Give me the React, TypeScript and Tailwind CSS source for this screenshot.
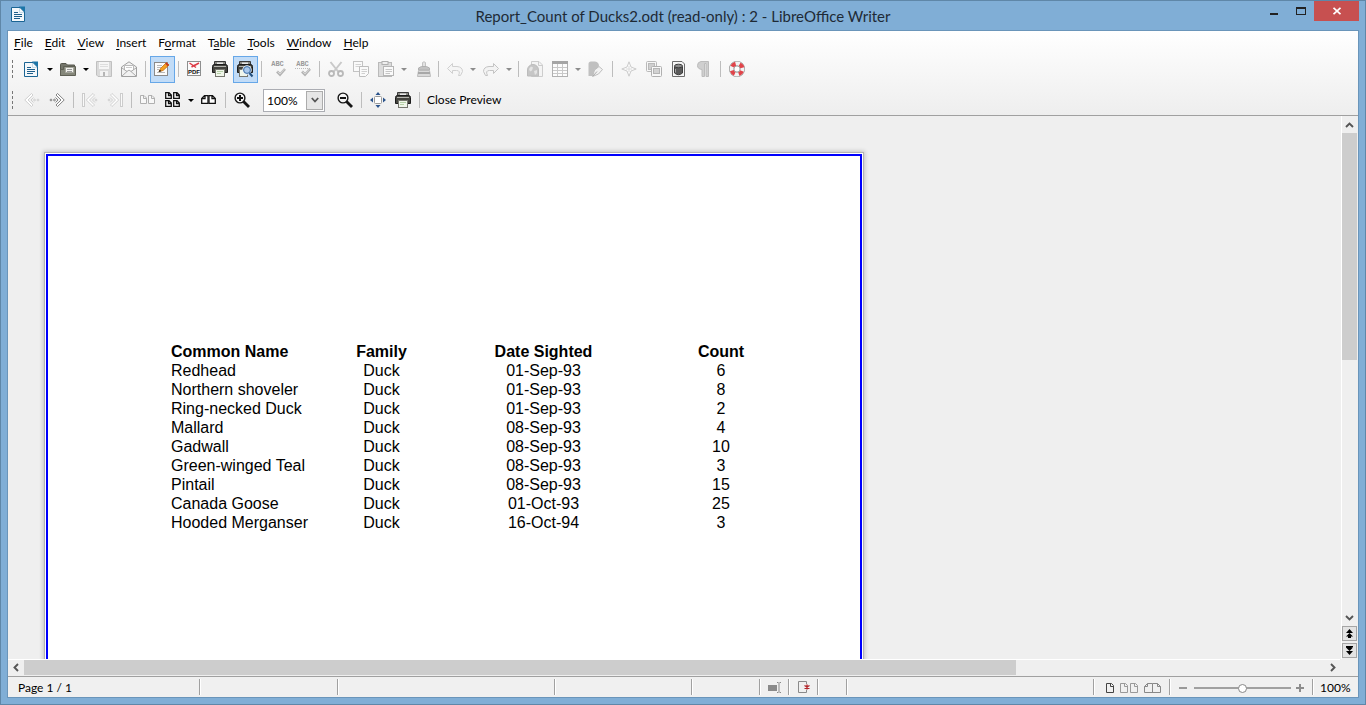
import React, { useState } from "react";
import type { ReactNode } from "react";

/* ---------- small building blocks ---------- */

function Icon({ children, crisp }: { children: ReactNode; crisp?: boolean }) {
  return (
    <svg
      width="17"
      height="17"
      viewBox="0 0 17 17"
      fill="none"
      shapeRendering={crisp ? "crispEdges" : "auto"}
      aria-hidden="true"
    >
      {children}
    </svg>
  );
}

function ToolButton({
  label,
  children,
  active,
  disabled,
}: {
  label: string;
  children: ReactNode;
  active?: boolean;
  disabled?: boolean;
}) {
  return (
    <button
      type="button"
      aria-label={label}
      title={label}
      disabled={disabled}
      className={
        active
          ? "flex h-[27px] w-[25px] shrink-0 items-center border border-[#66a7e8] bg-[#c2dcf7] pl-[3px]"
          : "flex h-[27px] w-[25px] shrink-0 items-center pl-1"
      }
    >
      {children}
    </button>
  );
}

function Arrow({ label, dim }: { label: string; dim?: boolean }) {
  return (
    <button type="button" aria-label={label} className="flex w-[11px] shrink-0 items-center pl-[2px]">
      <svg width="6" height="3" viewBox="0 0 6 3" aria-hidden="true">
        <path d="M0 0H6L3 3Z" fill={dim ? "#8c8c8c" : "#000"} />
      </svg>
    </button>
  );
}

function Sep() {
  return (
    <span className="flex w-2 shrink-0 pl-[3px]">
      <span className="h-4 w-px bg-[#bdbdbd]" />
    </span>
  );
}

function Grip() {
  return (
    <span className="flex w-3 shrink-0 pl-1">
      <span className="h-[18px] w-px border-l border-dashed border-[#777]" />
    </span>
  );
}

/* ---------- icons ---------- */

const WriterIcon = () => (
  <Icon>
    <path d="M.500 1.500H9L13.500 6V15.500H.500Z" fill="#f4f8fb" stroke="#1b6594" />
    <path d="M8 .5H14V6.500Z" fill="#1b75a8" />
    <path d="M8.500 2V6.500H13" stroke="#c8dce9" />
    <path d="M3 6.500H7M3 8.500H11M3 10.500H11M3 12.500H9" stroke="#1f5f8b" />
  </Icon>
);

const OpenIcon = () => (
  <Icon>
    <path d="M.500 3.500Q.5 2.500 1.500 2.500H6L7.500 4H14.500V14.500H.500Z" fill="#74756a" stroke="#55564c" />
    <path d="M.500 8.500H3.500V5.500H15.500V14.500H.500Z" fill="#85877a" stroke="#5f6055" />
    <path d="M5.500 6.500H13.500V11.500H5.500Z" fill="#f3f3ef" stroke="#a5a69c" />
    <path d="M7 8.500H12M7 10.500H12" stroke="#999" />
  </Icon>
);

const SaveIcon = () => (
  <Icon>
    <path d="M.500 .5H15.500V15.500H2L.500 14Z" fill="#dadada" stroke="#c0c0c0" />
    <rect x="3" y="1" width="10" height="7" fill="#f6f6f6" />
    <path d="M4 3.500H12M4 5.500H12" stroke="#dedede" />
    <rect x="4" y="10" width="8" height="5" fill="#f2f2f2" />
    <rect x="7" y="11" width="2" height="4" fill="#b5b5b5" />
  </Icon>
);

const MailIcon = () => (
  <Icon>
    <path d="M.500 6L8 .8L15.500 6V15.500H.500Z" fill="#f2f2f2" stroke="#a0a0a0" />
    <path d="M3.500 9V4.500H12.500V9" fill="#fff" stroke="#bbb" />
    <path d="M1 7L6 10.500L1 15M15 7L10 10.500L15 15M6 10.500L8 9L10 10.500" stroke="#ababab" />
    <path d="M5 6.500H11" stroke="#ccc" />
  </Icon>
);

const EditIcon = () => (
  <Icon>
    <rect x=".5" y="1.500" width="13" height="13" fill="#fbfbfb" stroke="#8a8a8a" />
    <path d="M3 4.500H8M3 6.500H7M3 8.500H5M3 11.500H11" stroke="#b9b9b9" />
    <path d="M5 10.500L6.500 7.500L12.500 1.500L15 4L9 9.500Z" fill="#f4a224" stroke="#c66f10" strokeWidth=".8" />
    <path d="M12.500 1.500L15 4L13.700 5.200L11.200 2.800Z" fill="#c0392b" />
    <path d="M4.500 11L5.800 8.800L7.500 10.200Z" fill="#222" />
  </Icon>
);

const PdfIcon = () => (
  <Icon>
    <rect x=".5" y=".5" width="13" height="14" fill="#fbfbfb" stroke="#8f8f8f" />
    <path d="M2.500 2L9 6.500M6.500 5L12 2M4.500 6L8 4" stroke="#dd3a45" strokeWidth="1.500" />
    <text x="7" y="13" textAnchor="middle" fontSize="6" fontWeight="700" fontFamily="Liberation Sans, sans-serif" fill="#111">
      PDF
    </text>
  </Icon>
);

const PrinterBody = () => (
  <>
    <path d="M2.500 4V.5H13.500V4" fill="#8a8a84" stroke="#3a3a3a" />
    <path d="M5 2.500H11" stroke="#e8e8e8" strokeWidth="2" />
    <path d="M.500 5.500Q.5 3.500 2.500 3.500H13.500Q15.500 3.500 15.500 5.500V11.500H.500Z" fill="#44443f" stroke="#1c1c1c" />
    <path d="M2 5.500H14" stroke="#b5b5b0" />
  </>
);

const PrintIcon = () => (
  <Icon>
    <PrinterBody />
    <rect x="3.500" y="8.500" width="9" height="7" fill="#f0f6ea" stroke="#77776f" />
    <path d="M5 10.500H11M5 12.500H9" stroke="#b5cfa6" />
  </Icon>
);

const PreviewIcon = () => (
  <Icon>
    <PrinterBody />
    <rect x="2.500" y="8.500" width="8" height="7" fill="#f0f6ea" stroke="#77776f" />
    <circle cx="10" cy="9" r="4.200" fill="#a9c8ec" stroke="#eef3f8" />
    <circle cx="10" cy="9" r="3.400" stroke="#3c6ea5" />
    <path d="M12.500 12L15.500 15.500" stroke="#23507f" strokeWidth="2" />
  </Icon>
);

const SpellIcon = ({ auto }: { auto?: boolean }) => (
  <Icon>
    <text x="7.500" y="5" textAnchor="middle" fontSize="7" fontWeight="700" fontFamily="Liberation Mono, monospace" fill="#9a9a9a">
      ABC
    </text>
    {auto && <path d="M0 7.500H15" stroke="#bbb" strokeDasharray="1 1" />}
    <path d="M7 10.500L10 13.500L15 8" stroke="#b4b4b4" strokeWidth="2.600" />
    <path d="M7.500 10.500L10 13L14.500 8" stroke="#dedede" strokeWidth=".8" />
  </Icon>
);

const CutIcon = () => (
  <Icon>
    <path d="M2.500 1L10.500 11M13.500 1L5.500 11" stroke="#c9c9c9" strokeWidth="2" />
    <circle cx="3.500" cy="12.500" r="2.500" stroke="#b9b9b9" strokeWidth="1.800" />
    <circle cx="12.500" cy="12.500" r="2.500" stroke="#b9b9b9" strokeWidth="1.800" />
  </Icon>
);

const CopyIcon = () => (
  <Icon>
    <rect x=".5" y=".5" width="9" height="10" fill="#fafafa" stroke="#c3c3c3" />
    <path d="M2.500 3.500H8M2.500 5.500H8" stroke="#d4d4d4" />
    <path d="M6.500 5.500H15.500V12.500L12.500 15.500H6.500Z" fill="#fafafa" stroke="#bdbdbd" />
    <path d="M8.500 8.500H14M8.500 10.500H14M8.500 12.500H12" stroke="#d0d0d0" />
  </Icon>
);

const PasteIcon = () => (
  <Icon>
    <rect x=".5" y="1.500" width="13" height="14" fill="#dcdcdc" stroke="#bababa" />
    <rect x="4" y=".5" width="6" height="3" fill="#efefef" stroke="#b0b0b0" />
    <rect x="5.500" y="5.500" width="10" height="9" fill="#fafafa" stroke="#b6b6b6" />
    <path d="M7.500 8.500H14M7.500 10.500H14M7.500 12.500H12" stroke="#c6c6c6" />
  </Icon>
);

const BrushIcon = () => (
  <Icon>
    <path d="M8.500 6V1.500Q10 0 11.500 1.500V6" fill="#e2e2e2" stroke="#c2c2c2" />
    <path d="M4.500 9V7L7.500 5.500H12.500L15.500 7V9Z" fill="#c2c2c2" stroke="#b0b0b0" />
    <path d="M4.500 9.500H15.500L16.500 15.500H3.500Z" fill="#dadada" stroke="#bcbcbc" />
    <path d="M4 12H16" stroke="#a8a8a8" strokeWidth="2" />
  </Icon>
);

const UndoIcon = () => (
  <Icon>
    <path d="M.500 7.500L5.500 2.500V5.500H10Q15.500 6 15.500 10.500L13.500 14.500H11.500Q14 9.500 9.500 9.500H5.500V12.500Z" fill="#f5f5f5" stroke="#d0d0d0" />
  </Icon>
);

const RedoIcon = () => (
  <Icon>
    <path d="M15.500 7.500L10.500 2.500V5.500H6Q.5 6 .5 10.500L2.500 14.500H4.500Q2 9.500 6.500 9.500H10.500V12.500Z" fill="#f3f3f3" stroke="#c4c4c4" />
  </Icon>
);

const LinkIcon = () => (
  <Icon>
    <path d="M4.500 .5H12L15.500 4V15.500H4.500Z" fill="#f4f4f4" stroke="#cdcdcd" />
    <path d="M11.500 1V4.500H15" stroke="#cdcdcd" />
    <path d="M.500 15V9A5.500 5.500 0 0 1 11.500 9V15Z" fill="#c6c6c6" stroke="#bcbcbc" />
    <path d="M2 8L4 5.500L6 6.500L5 9.500L3 10.500ZM7 10L10 9L10 12L8 14Z" fill="#e4e4e4" />
  </Icon>
);

const TableIcon = () => (
  <Icon crisp>
    <rect x=".5" y=".5" width="15" height="15" fill="#fcfcfc" stroke="#b0b0b0" />
    <rect x="0" y="0" width="16" height="3" fill="#a5a5a5" />
    <path d="M1 6.500H15M1 9.500H15M1 12.500H15M5.500 3V15M10.500 3V15" stroke="#c9c9c9" />
  </Icon>
);

const DrawIcon = () => (
  <Icon>
    <path d="M.500 15V3Q.500 .5 3 .5H7Q11 1 11 5L5 14V15Z" fill="#c0c0c0" />
    <path d="M4.500 15.500L6.500 9L11 5.500L14.500 8.500L10.500 13Z" fill="#f2f2f2" stroke="#bdbdbd" />
    <path d="M5 15L9 10.500" stroke="#aaa" />
  </Icon>
);

const NavigatorIcon = () => (
  <Icon>
    <path d="M8 .8L10 6L15.200 8L10 10L8 15.200L6 10L.8 8L6 6Z" fill="#fafafa" stroke="#cbcbcb" />
    <path d="M8 5V11M5 8H11" stroke="#dcdcdc" />
  </Icon>
);

const GalleryIcon = () => (
  <Icon>
    <rect x=".5" y=".5" width="10" height="10" rx="1" fill="#f6f6f6" stroke="#b9b9b9" />
    <rect x="2.500" y="2.500" width="6" height="6" fill="#cfcfcf" stroke="#b9b9b9" />
    <rect x="5.500" y="5.500" width="10" height="10" rx="1" fill="#f8f8f8" stroke="#b0b0b0" />
    <rect x="7.500" y="7.500" width="6" height="5" fill="#d2d2d2" stroke="#b5b5b5" />
  </Icon>
);

const DatabaseIcon = () => (
  <Icon>
    <path d="M1.500 .5H11L13.500 3V15.500H1.500Z" fill="#f6f6f6" stroke="#6d6d6d" />
    <path d="M3.500 5.500V12Q7.500 15.500 11.500 12V5.500" fill="#5b5b5b" stroke="#3d3d3d" />
    <ellipse cx="7.500" cy="5" rx="4" ry="1.800" fill="#8b8b8b" stroke="#3d3d3d" />
    <path d="M4.500 8V11.500" stroke="#a5a5a5" />
  </Icon>
);

const ParagraphIcon = () => (
  <Icon>
    <path d="M12.500 .5H5Q1.500 1 1.500 4.500Q1.500 8 6 8.500V15.500H8.500V2.500H10V15.500H12.500Z" fill="#cfcfcf" stroke="#bcbcbc" />
  </Icon>
);

const HelpIcon = () => (
  <Icon>
    <circle cx="8" cy="8" r="5.400" stroke="#8d8d8d" strokeWidth="5.200" />
    <circle cx="8" cy="8" r="5.400" stroke="#f3f3f3" strokeWidth="4" />
    <circle cx="8" cy="8" r="5.400" stroke="#e0444a" strokeWidth="4" strokeDasharray="4.240 4.240" strokeDashoffset="-2.120" />
    <circle cx="8" cy="8" r="3" fill="#fff" stroke="#999" strokeWidth=".8" />
  </Icon>
);

const Chevrons = ({ dir, color, bar }: { dir: "left" | "right"; color: string; bar?: boolean }) => (
  <Icon>
    <g transform={dir === "left" ? undefined : "translate(16 0) scale(-1 1)"}>
      {bar && <rect x=".5" y="1.500" width="2" height="13" fill="#fafafa" stroke={color} />}
      <g transform={bar ? "translate(3.500 0)" : undefined} stroke={color} strokeWidth=".9">
        <path d="M.8 8L7.500 1.500L9 3L4 8L9 13L7.500 14.500Z" fill="#fff" />
        <path d="M9.500 5.500L7 8L9.500 10.500" />
        <circle cx="10.500" cy="8" r=".9" />
        {!bar && <circle cx="14" cy="8" r=".9" />}
      </g>
    </g>
  </Icon>
);

const TwoPagesIcon = () => (
  <Icon>
    <g stroke="#b0b0b0" fill="#f8f8f8">
      <path d="M.500 3.500H4L6.500 6V11.500H.500ZM3.500 3.500V6.500H6.500" />
      <path d="M8.500 3.500H12L14.500 6V11.500H8.500ZM11.500 3.500V6.500H14.500" />
    </g>
  </Icon>
);

const miniPage = "M.700 .7H4L6.300 3V6.300H.700ZM3.500 .7V3.500H6.300";

const MultiPagesIcon = () => (
  <Icon>
    <g stroke="#111" fill="#fff" strokeWidth="1.300">
      <path d={miniPage} />
      <path d={miniPage} transform="translate(8 0)" />
      <path d={miniPage} transform="translate(0 8)" />
      <path d={miniPage} transform="translate(8 8)" />
    </g>
  </Icon>
);

const BookIcon = () => (
  <Icon>
    <g stroke="#111" fill="#fff" strokeWidth="1.300">
      <path d="M7 3.700H3.500L.700 6.500V11.300H7ZM4 3.700V6.700H.700" />
      <path d="M8 3.700H11.500L14.300 6.500V11.300H8ZM11 3.700V6.700H14.300" />
    </g>
  </Icon>
);

const ZoomIcon = ({ plus }: { plus?: boolean }) => (
  <Icon>
    <path d="M9.500 9.500L15 15" stroke="#161616" strokeWidth="2.800" />
    <circle cx="6" cy="6" r="4.900" fill="#f4f4f4" stroke="#161616" strokeWidth="1.400" />
    <path d={plus ? "M3 6H9M6 3V9" : "M3 6H9"} stroke="#111" strokeWidth="2" />
  </Icon>
);

const FullWidthIcon = () => (
  <Icon>
    <rect x="4.500" y="4.500" width="7" height="7" rx="1" fill="#fff" stroke="#9a9a9a" />
    <path d="M8 0L10.500 3H5.500ZM8 16L10.500 13H5.500ZM0 8L3 5.500V10.500ZM16 8L13 5.500V10.500Z" fill="#2c548c" />
  </Icon>
);

/* ---------- page parts ---------- */

const menus = [
  { before: "", key: "F", after: "ile" },
  { before: "", key: "E", after: "dit" },
  { before: "", key: "V", after: "iew" },
  { before: "", key: "I", after: "nsert" },
  { before: "F", key: "o", after: "rmat" },
  { before: "T", key: "a", after: "ble" },
  { before: "", key: "T", after: "ools" },
  { before: "", key: "W", after: "indow" },
  { before: "", key: "H", after: "elp" },
];

const ducks = [
  ["Redhead", "Duck", "01-Sep-93", "6"],
  ["Northern shoveler", "Duck", "01-Sep-93", "8"],
  ["Ring-necked Duck", "Duck", "01-Sep-93", "2"],
  ["Mallard", "Duck", "08-Sep-93", "4"],
  ["Gadwall", "Duck", "08-Sep-93", "10"],
  ["Green-winged Teal", "Duck", "08-Sep-93", "3"],
  ["Pintail", "Duck", "08-Sep-93", "15"],
  ["Canada Goose", "Duck", "01-Oct-93", "25"],
  ["Hooded Merganser", "Duck", "16-Oct-94", "3"],
];

function TitleBar() {
  return (
    <header className="grid h-[29px] grid-cols-[1fr_auto_1fr] items-start">
      <span className="pt-[5px] pl-[10px]">
        <WriterIcon />
      </span>
      <h1 className="pt-[5px] text-[15px] leading-5 text-[#1e2a35]">
        Report_Count of Ducks2.odt (read-only) : 2 - LibreOffice Writer
      </h1>
      <div className="flex h-5 justify-end pr-[6px]">
        <button type="button" aria-label="Minimize" className="flex w-[27px] items-center justify-center pt-[6px]">
          <span className="h-[2px] w-2 bg-[#222]" />
        </button>
        <button type="button" aria-label="Maximize" className="flex w-[27px] items-center justify-center">
          <span className="h-2 w-[10px] border border-t-2 border-[#222]" />
        </button>
        <button type="button" aria-label="Close" className="flex w-[45px] items-center justify-center bg-[#c75050]">
          <svg width="8" height="8" viewBox="0 0 8 8" aria-hidden="true">
            <path d="M.5 .8L7.500 7.200M7.500 .8L.5 7.200" stroke="#fff" strokeWidth="1.800" />
          </svg>
        </button>
      </div>
    </header>
  );
}

function StandardBar() {
  return (
    <div role="toolbar" aria-label="Standard" className="flex h-7 items-center">
      <Grip />
      <ToolButton label="New"><WriterIcon /></ToolButton>
      <Arrow label="New options" />
      <ToolButton label="Open"><OpenIcon /></ToolButton>
      <Arrow label="Open options" />
      <ToolButton label="Save" disabled><SaveIcon /></ToolButton>
      <ToolButton label="E-mail" disabled><MailIcon /></ToolButton>
      <Sep />
      <ToolButton label="Edit File" active><EditIcon /></ToolButton>
      <Sep />
      <ToolButton label="Export as PDF"><PdfIcon /></ToolButton>
      <ToolButton label="Print"><PrintIcon /></ToolButton>
      <ToolButton label="Page Preview" active><PreviewIcon /></ToolButton>
      <Sep />
      <ToolButton label="Spelling" disabled><SpellIcon /></ToolButton>
      <ToolButton label="AutoSpellcheck" disabled><SpellIcon auto /></ToolButton>
      <Sep />
      <ToolButton label="Cut" disabled><CutIcon /></ToolButton>
      <ToolButton label="Copy" disabled><CopyIcon /></ToolButton>
      <ToolButton label="Paste" disabled><PasteIcon /></ToolButton>
      <Arrow label="Paste options" dim />
      <ToolButton label="Clone Formatting" disabled><BrushIcon /></ToolButton>
      <Sep />
      <ToolButton label="Undo" disabled><UndoIcon /></ToolButton>
      <Arrow label="Undo options" dim />
      <ToolButton label="Redo" disabled><RedoIcon /></ToolButton>
      <Arrow label="Redo options" dim />
      <Sep />
      <ToolButton label="Hyperlink" disabled><LinkIcon /></ToolButton>
      <ToolButton label="Insert Table" disabled><TableIcon /></ToolButton>
      <Arrow label="Table options" dim />
      <ToolButton label="Show Draw Functions" disabled><DrawIcon /></ToolButton>
      <Sep />
      <ToolButton label="Navigator" disabled><NavigatorIcon /></ToolButton>
      <ToolButton label="Gallery" disabled><GalleryIcon /></ToolButton>
      <ToolButton label="Data Sources"><DatabaseIcon /></ToolButton>
      <ToolButton label="Nonprinting Characters" disabled><ParagraphIcon /></ToolButton>
      <Sep />
      <ToolButton label="Help"><HelpIcon /></ToolButton>
    </div>
  );
}

function PreviewBar() {
  return (
    <div role="toolbar" aria-label="Page Preview" className="flex h-8 items-center pt-[2px]">
      <Grip />
      <ToolButton label="Previous Page" disabled><Chevrons dir="left" color="#cccccc" /></ToolButton>
      <ToolButton label="Next Page"><Chevrons dir="right" color="#777777" /></ToolButton>
      <Sep />
      <ToolButton label="First Page" disabled><Chevrons dir="left" color="#cccccc" bar /></ToolButton>
      <ToolButton label="Last Page" disabled><Chevrons dir="right" color="#cccccc" bar /></ToolButton>
      <Sep />
      <ToolButton label="Two Pages" disabled><TwoPagesIcon /></ToolButton>
      <ToolButton label="Multiple Pages"><MultiPagesIcon /></ToolButton>
      <Arrow label="Multiple pages options" />
      <ToolButton label="Book Preview"><BookIcon /></ToolButton>
      <Sep />
      <ToolButton label="Zoom In"><ZoomIcon plus /></ToolButton>
      <div className="mx-2 grid h-[23px] w-[62px] shrink-0 border border-[#abadb3] bg-white">
        <select
          aria-label="Zoom"
          defaultValue="100%"
          className="col-start-1 row-start-1 w-full appearance-none bg-transparent pt-px pl-[3px] text-[12px] leading-5 outline-none"
        >
          <option>50%</option>
          <option>75%</option>
          <option>100%</option>
          <option>150%</option>
          <option>200%</option>
        </select>
        <span className="pointer-events-none col-start-1 row-start-1 my-px mr-px flex w-[17px] items-center justify-center justify-self-end border border-[#acacac] bg-[#e6e6e6]">
          <svg width="8" height="6" viewBox="0 0 8 6" fill="none" aria-hidden="true">
            <path d="M.8 1L4 4.500L7.200 1" stroke="#555" strokeWidth="1.800" />
          </svg>
        </span>
      </div>
      <ToolButton label="Zoom Out"><ZoomIcon /></ToolButton>
      <Sep />
      <ToolButton label="Full Screen"><FullWidthIcon /></ToolButton>
      <ToolButton label="Print"><PrintIcon /></ToolButton>
      <Sep />
      <button type="button" className="shrink-0 px-[3px] text-[12px] leading-5 whitespace-nowrap">
        Close Preview
      </button>
    </div>
  );
}

function DocumentPage() {
  return (
    <article className="min-h-[1056px] w-[820px] shrink-0 border border-[#b4b4b4] bg-white p-px shadow-[0_0_4px_1px_rgba(0,0,0,0.18)]">
      <div className="min-h-[1052px] border-2 border-[#0000fe] pt-[186px] pl-[123px] text-[16px] leading-[19px] [font-family:'Liberation_Sans',Arial,sans-serif]">
        <table className="table-fixed border-collapse text-center">
          <colgroup>
            <col className="w-[144px]" />
            <col className="w-[133px]" />
            <col className="w-[191px]" />
            <col className="w-[164px]" />
          </colgroup>
          <thead>
            <tr>
              <th className="p-0 text-left">Common Name</th>
              <th className="p-0">Family</th>
              <th className="p-0">Date Sighted</th>
              <th className="p-0">Count</th>
            </tr>
          </thead>
          <tbody>
            {ducks.map((row) => (
              <tr key={row[0]}>
                <td className="p-0 text-left whitespace-nowrap">{row[0]}</td>
                <td className="p-0">{row[1]}</td>
                <td className="p-0">{row[2]}</td>
                <td className="p-0">{row[3]}</td>
              </tr>
            ))}
          </tbody>
        </table>
      </div>
    </article>
  );
}

const chevronPaths = {
  up: "M1 6L4.500 2.500L8 6",
  down: "M1 3L4.500 6.500L8 3",
  left: "M6 1L2.500 4.500L6 8",
  right: "M3 1L6.500 4.500L3 8",
};

function ScrollArrow({ dir, label }: { dir: keyof typeof chevronPaths; label: string }) {
  const vertical = dir === "up" || dir === "down";
  return (
    <button
      type="button"
      aria-label={label}
      className={
        vertical
          ? "flex h-4 w-[15px] shrink-0 items-center justify-center"
          : "flex h-[15px] w-4 shrink-0 items-center justify-center"
      }
    >
      <svg width="9" height="9" viewBox="0 0 9 9" fill="none" aria-hidden="true">
        <path d={chevronPaths[dir]} stroke="#555" strokeWidth="1.900" />
      </svg>
    </button>
  );
}

function PageJump({ down }: { down?: boolean }) {
  return (
    <button
      type="button"
      aria-label={down ? "Next page" : "Previous page"}
      className="flex h-[15px] w-[15px] items-center justify-center border border-[#a5a5a5] bg-[#e3e3e3]"
    >
      <svg width="9" height="9" viewBox="0 0 9 9" aria-hidden="true">
        <path
          d={down ? "M1 0H8V1H6L8 1.500L4.500 5L1 1.500ZM1 5H8L4.500 9Z" : "M4.500 0L8 4H1ZM4.500 4L8 7.500H6V9H3V7.500H1Z"}
          fill="#000"
        />
      </svg>
    </button>
  );
}

function VerticalScroll() {
  return (
    <div className="flex w-[17px] shrink-0 flex-col border-l border-white">
      <div className="flex h-[17px] items-end">
        <ScrollArrow dir="up" label="Scroll up" />
      </div>
      <div className="flex min-h-0 flex-1 flex-col pr-px">
        <span className="flex-[227_1_0] bg-[#cdcdcd]" />
        <span className="flex-[248_1_0]" />
      </div>
      <ScrollArrow dir="down" label="Scroll down" />
      <div className="flex flex-col gap-[2px] py-px">
        <PageJump />
        <PageJump down />
      </div>
    </div>
  );
}

function HorizontalScroll() {
  return (
    <div className="mr-[18px] flex h-[17px] shrink-0 border-t border-white pb-px">
      <ScrollArrow dir="left" label="Scroll left" />
      <span className="flex-[992_1_0] bg-[#cdcdcd]" />
      <span className="flex-[308_1_0]" />
      <ScrollArrow dir="right" label="Scroll right" />
    </div>
  );
}

function StatusBar() {
  const [zoom, setZoom] = useState(50);
  const cell = "flex h-4 shrink-0 items-center border-r border-[#a0a0a0] shadow-[1px_0_0_#fff]";
  return (
    <footer className="flex h-[21px] shrink-0 items-center border-t border-[#a0a0a0] bg-[#f0f0f0] text-[12px] leading-4">
      <span className={cell + " w-48 pt-[2px] pl-[10px]"}>Page 1 / 1</span>
      <span className={cell + " w-[138px]"} />
      <span className={cell + " w-[217px]"} />
      <span className={cell + " w-[137px]"} />
      <span className={cell + " w-[68px]"} />
      <span className={cell + " w-[29px] justify-center pl-px"}>
        <svg width="13" height="11" viewBox="0 0 13 11" fill="none" aria-hidden="true">
          <rect x="0" y="3" width="9" height="6" fill="#8a8a8a" />
          <path d="M9 .5H10.500M11.500 .5H13M9 10.500H10.500M11.500 10.500H13M11 1V10" stroke="#8a8a8a" />
        </svg>
      </span>
      <span className={cell + " w-[29px] justify-center pl-[3px]"}>
        <svg width="13" height="12" viewBox="0 0 13 12" fill="none" aria-hidden="true">
          <path d="M8.500 3V.5H.500V11.500H8.500V9" stroke="#8a8a8a" />
          <path d="M9 3.500V8.500M6.500 4.500L11.500 7.500M11.500 4.500L6.500 7.500" stroke="#b3262b" strokeWidth="1.400" />
        </svg>
      </span>
      <span className={cell + " w-[29px]"} />
      <span className="w-0 flex-1" />
      <span className={cell + " w-px"} />
      <div className="flex h-4 shrink-0 items-center border-r border-[#a0a0a0] pt-px pr-2 pl-3 shadow-[1px_0_0_#fff]">
        <button type="button" aria-label="Single page" className="mr-[5px]">
          <svg width="9" height="10" viewBox="0 0 9 10" fill="none" aria-hidden="true">
            <path d="M.500 .5H5.500L7.500 2.500V9.500H.500ZM4.500 .5V3.500H7.500" stroke="#444" />
          </svg>
        </button>
        <button type="button" aria-label="Multiple pages" className="mr-[5px]">
          <svg width="19" height="10" viewBox="0 0 19 10" fill="none" aria-hidden="true">
            <path d="M.500 .5H5.500L7.500 2.500V9.500H.500ZM4.500 .5V3.500H7.500M10.500 .5H15.500L17.500 2.500V9.500H10.500ZM14.500 .5V3.500H17.500" stroke="#999" />
          </svg>
        </button>
        <button type="button" aria-label="Book view">
          <svg width="17" height="10" viewBox="0 0 17 10" fill="none" aria-hidden="true">
            <path d="M8.500 .5H3.500L.500 3.500V9.500H16.500V3.500L13.500 .5H8.500V9.500M3.500 .5V3.500H.500M13.500 .5V3.500H16.500" stroke="#888" />
          </svg>
        </button>
      </div>
      <div className="flex h-4 shrink-0 items-center border-r border-[#a0a0a0] px-2 pt-px shadow-[1px_0_0_#fff]">
        <button type="button" aria-label="Zoom out" onClick={() => setZoom(Math.max(0, zoom - 5))} className="flex h-4 w-[10px] items-center justify-center">
          <span className="h-[2px] w-2 bg-[#999]" />
        </button>
        <input
          type="range"
          aria-label="Zoom slider"
          min={0}
          max={100}
          value={zoom}
          onChange={(e: React.ChangeEvent<HTMLInputElement>) => setZoom(Number(e.target.value))}
          className="mr-[5px] ml-[6px] h-4 w-[97px] appearance-none bg-transparent [&::-webkit-slider-runnable-track]:h-[2px] [&::-webkit-slider-runnable-track]:bg-[#a0a0a0] [&::-webkit-slider-thumb]:-mt-[3px] [&::-webkit-slider-thumb]:size-[9px] [&::-webkit-slider-thumb]:appearance-none [&::-webkit-slider-thumb]:rounded-full [&::-webkit-slider-thumb]:border [&::-webkit-slider-thumb]:border-[#888] [&::-webkit-slider-thumb]:bg-white"
        />
        <button type="button" aria-label="Zoom in" onClick={() => setZoom(Math.min(100, zoom + 5))} className="flex h-4 w-2 items-center justify-center">
          <svg width="8" height="8" viewBox="0 0 8 8" aria-hidden="true">
            <path d="M0 4H8M4 0V8" stroke="#8c8c8c" strokeWidth="2" />
          </svg>
        </button>
      </div>
      <span className="w-[45px] shrink-0 pt-[2px] pl-[7px]">100%</span>
    </footer>
  );
}

export default function App() {
  return (
    <div className="flex h-screen flex-col overflow-hidden border border-[#5f87a8] bg-[#80aed6] text-black [font-family:Lato,'Open_Sans',sans-serif]">
      <TitleBar />
      <main className="mx-[6px] mb-[6px] flex min-h-0 flex-1 flex-col border border-[#6a95ba] bg-[#efefef]">
        <div className="shrink-0 border-b border-[#a0a0a0] bg-linear-to-b from-white to-[#eeeeee]">
          <nav aria-label="Menu" className="flex h-6 items-center gap-3 pl-[6px] text-[12px] leading-4">
            {menus.map((m) => (
              <button type="button" key={m.key + m.after}>
                {m.before}
                <u className="underline-offset-2">{m.key}</u>
                {m.after}
              </button>
            ))}
          </nav>
          <StandardBar />
          <PreviewBar />
        </div>
        <div className="flex min-h-0 flex-1">
          <section aria-label="Document" className="min-w-0 flex-1 overflow-hidden pt-9 pl-9">
            <DocumentPage />
          </section>
          <VerticalScroll />
        </div>
        <HorizontalScroll />
        <StatusBar />
      </main>
    </div>
  );
}
